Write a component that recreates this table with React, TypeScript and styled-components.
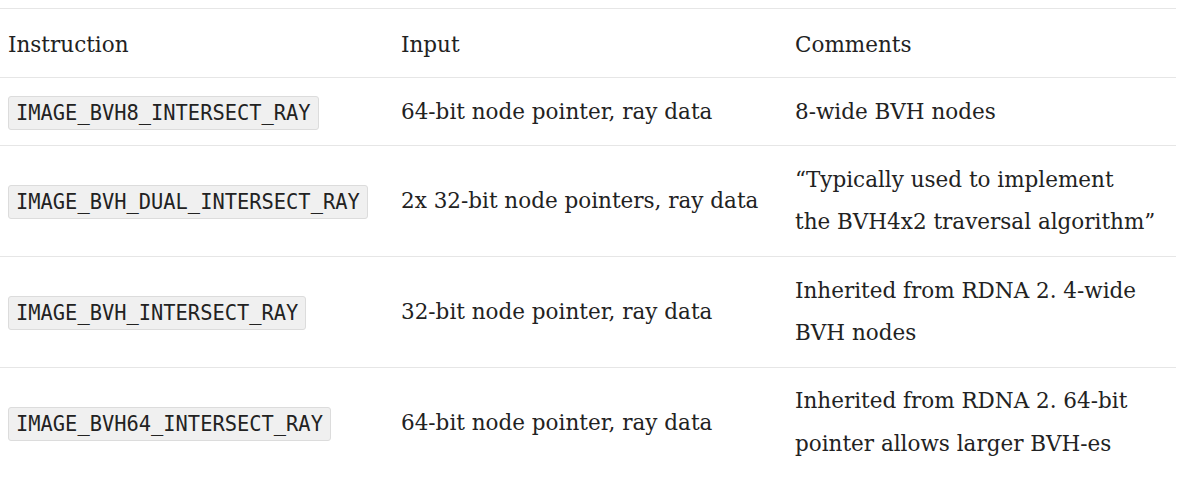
import React from "react";
import styled, { createGlobalStyle } from "styled-components";

const Global = createGlobalStyle`
  html, body { margin: 0; padding: 0; background: #ffffff; }
  body { padding-top: 8px; }
`;

const Table = styled.table`
  width: 1176px;
  border-collapse: collapse;
  table-layout: fixed;
  font-family: "DejaVu Serif", "Liberation Serif", serif;
  font-size: 21.5px;
  line-height: 42.5px;
  color: #222222;
`;

const HeadCell = styled.th`
  text-align: left;
  font-weight: normal;
  padding: 14.5px 8px 11px;
  vertical-align: middle;
`;

const Row = styled.tr`
  border-top: 1px solid #e6e6e6;
`;

const Cell = styled.td`
  padding: 12.5px 8px 12.25px;
  vertical-align: middle;
  white-space: pre-line;
`;

const Code = styled.code`
  display: inline-block;
  vertical-align: middle;
  font-family: "DejaVu Sans Mono", "Liberation Mono", monospace;
  font-size: 20.4px;
  line-height: 32px;
  padding: 0 7px;
  background: #f0f0f0;
  border: 1px solid #dcdcdc;
  border-radius: 3px;
  color: #222222;
  white-space: nowrap;
`;

const rows = [
  { ins: "IMAGE_BVH8_INTERSECT_RAY", input: "64-bit node pointer, ray data", comment: "8-wide BVH nodes" },
  { ins: "IMAGE_BVH_DUAL_INTERSECT_RAY", input: "2x 32-bit node pointers, ray data", comment: "\u201CTypically used to implement\nthe BVH4x2 traversal algorithm\u201D" },
  { ins: "IMAGE_BVH_INTERSECT_RAY", input: "32-bit node pointer, ray data", comment: "Inherited from RDNA 2. 4-wide\nBVH nodes" },
  { ins: "IMAGE_BVH64_INTERSECT_RAY", input: "64-bit node pointer, ray data", comment: "Inherited from RDNA 2. 64-bit\npointer allows larger BVH-es" },
];

export default function App() {
  return (
    <>
      <Global />
      <Table>
        <colgroup>
          <col style={{ width: 393 }} />
          <col style={{ width: 394 }} />
          <col style={{ width: 389 }} />
        </colgroup>
        <thead>
          <Row>
            <HeadCell>Instruction</HeadCell>
            <HeadCell>Input</HeadCell>
            <HeadCell>Comments</HeadCell>
          </Row>
        </thead>
        <tbody>
          {rows.map((r) => (
            <Row key={r.ins}>
              <Cell><Code>{r.ins}</Code></Cell>
              <Cell>{r.input}</Cell>
              <Cell>{r.comment}</Cell>
            </Row>
          ))}
        </tbody>
      </Table>
    </>
  );
}
